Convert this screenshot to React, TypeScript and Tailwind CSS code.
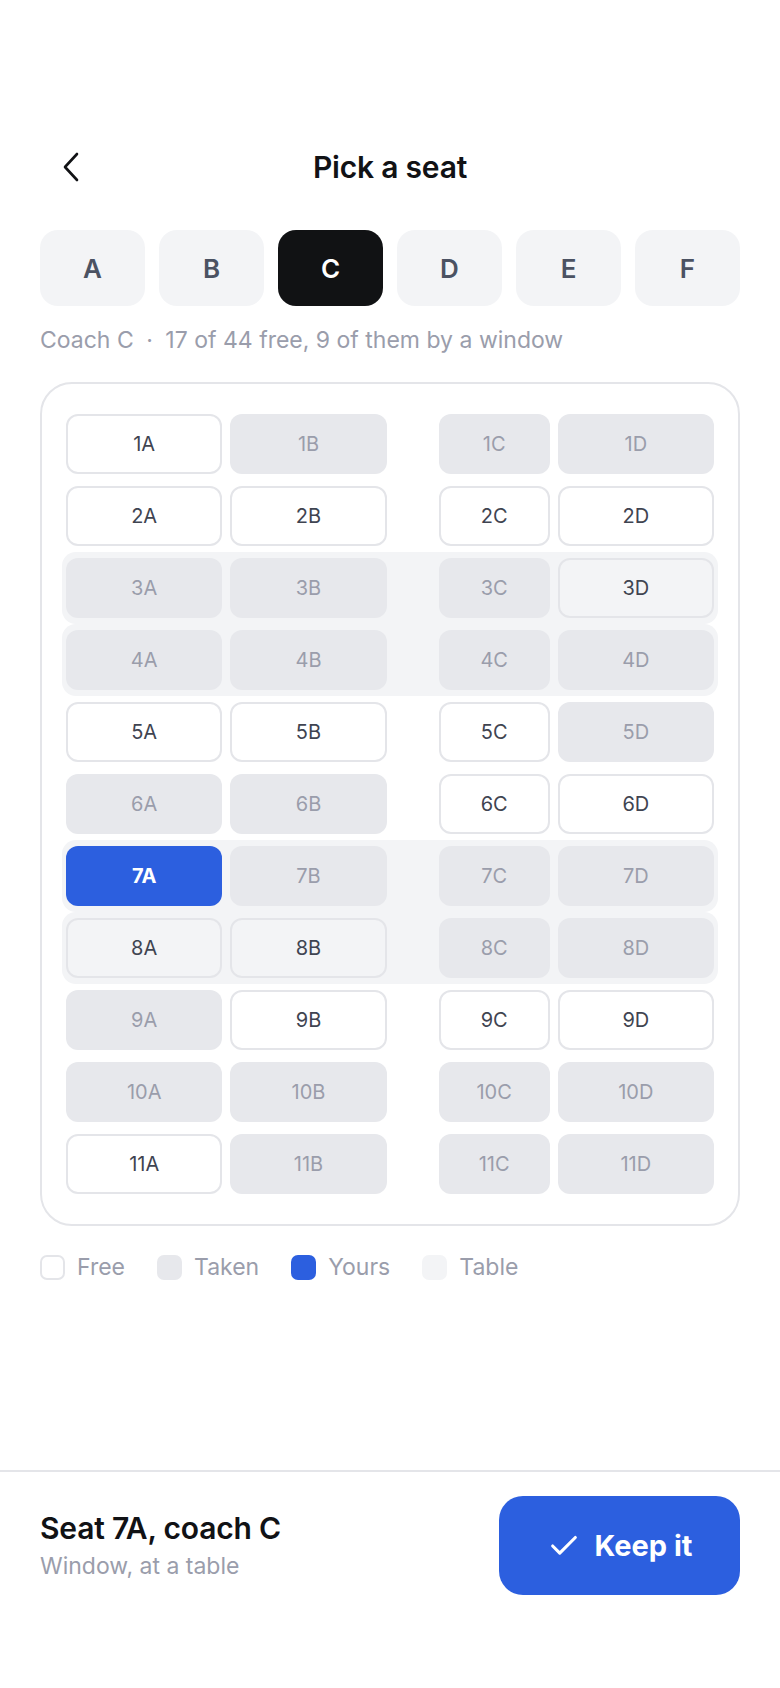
import { Check } from "lucide-react";

type SeatState = "free" | "taken" | "yours";

// one string per row, columns A B C D: f = free, t = taken, y = yours
const rows: { seats: string; table: boolean }[] = [
  { seats: "fttt", table: false },
  { seats: "ffff", table: false },
  { seats: "tttf", table: true },
  { seats: "tttt", table: true },
  { seats: "ffft", table: false },
  { seats: "ttff", table: false },
  { seats: "yttt", table: true },
  { seats: "fftt", table: true },
  { seats: "tfff", table: false },
  { seats: "tttt", table: false },
  { seats: "fttt", table: false },
];

const coaches = ["A", "B", "C", "D", "E", "F"];
const letters = ["A", "B", "C", "D"];

function toState(c: string): SeatState {
  if (c === "y") return "yours";
  if (c === "t") return "taken";
  return "free";
}

function Seat({ label, state }: { label: string; state: SeatState }) {
  let cls = "border-2 border-[#e4e5e9] text-[#3f4451]";
  if (state === "taken") cls = "bg-[#e7e8ec] text-[#9a9dab]";
  if (state === "yours") cls = "bg-[#2c5fdf] text-white font-bold";
  return (
    <button className={`w-full h-[60px] rounded-xl flex items-center justify-center text-[20px] ${cls}`}>
      {label}
    </button>
  );
}

export default function App() {
  return (
    <div className="min-h-[1688px] flex flex-col bg-white font-['Inter',sans-serif]">
      <main className="flex-1 px-10 pt-[139px]">
        {/* Header */}
        <div className="grid grid-cols-[56px_1fr_56px] items-center h-14">
          <button className="w-14 h-14 flex items-center" aria-label="Back">
            <svg width="20" height="32" viewBox="0 0 20 32" className="ml-[21px]" fill="none">
              <polyline
                points="16,3 4,16 16,29"
                stroke="#111215"
                strokeWidth="2.6"
                strokeLinecap="round"
                strokeLinejoin="round"
              />
            </svg>
          </button>
          <h1 className="text-center text-[30px] font-semibold text-[#111215] tracking-[-0.2px]">Pick a seat</h1>
          <div />
        </div>

        {/* Coach tabs */}
        <div className="grid grid-cols-6 gap-[14px] mt-[35px]">
          {coaches.map((c) => (
            <button
              key={c}
              className={`h-[76px] rounded-[18px] flex items-center justify-center text-[26px] font-semibold ${
                c === "C" ? "bg-[#111214] text-white" : "bg-[#f3f4f6] text-[#4b5262]"
              }`}
            >
              {c}
            </button>
          ))}
        </div>

        <p className="mt-[18px] text-[23px] leading-8 text-[#9a9dab]">
          Coach C <span className="mx-[6px]">·</span> 17 of 44 free, 9 of them by a window
        </p>

        {/* Seat map */}
        <div className="mt-[26px] border-2 border-[#e4e5e9] rounded-[32px] px-5 py-6">
          {rows.map((row, i) => (
            <div
              key={i}
              className={`grid grid-cols-[1fr_1fr_36px_111px_1fr] gap-2 px-1 py-1.5 rounded-[14px] ${
                row.table ? "bg-[#f3f4f6]" : ""
              }`}
            >
              {row.seats.split("").map((s, j) => (
                <div key={j} className={j === 2 ? "col-start-4" : ""}>
                  <Seat label={`${i + 1}${letters[j]}`} state={toState(s)} />
                </div>
              ))}
            </div>
          ))}
        </div>

        {/* Legend */}
        <div className="mt-[25px] flex items-center gap-8 text-[23px] leading-8 text-[#9a9dab]">
          <div className="flex items-center gap-3">
            <span className="w-[25px] h-[25px] rounded-[7px] border-2 border-[#e4e5e9]" />
            Free
          </div>
          <div className="flex items-center gap-3">
            <span className="w-[25px] h-[25px] rounded-[7px] bg-[#e7e8ec]" />
            Taken
          </div>
          <div className="flex items-center gap-3">
            <span className="w-[25px] h-[25px] rounded-[7px] bg-[#2c5fdf]" />
            Yours
          </div>
          <div className="flex items-center gap-3">
            <span className="w-[25px] h-[25px] rounded-[7px] bg-[#f3f4f6]" />
            Table
          </div>
        </div>
      </main>

      {/* Footer */}
      <footer className="border-t-2 border-[#e4e5e9] px-10 pt-[24px] pb-[93px] flex items-center justify-between">
        <div>
          <div className="text-[30px] leading-[34px] font-semibold text-[#111215] tracking-[-0.2px]">Seat 7A, coach C</div>
          <div className="mt-[7px] text-[23px] leading-7 text-[#9a9dab]">Window, at a table</div>
        </div>
        <button className="w-[241px] h-[99px] rounded-[24px] bg-[#2c5fdf] text-white flex items-center justify-center gap-[14px]">
          <Check size={34} strokeWidth={2.2} />
          <span className="text-[29px] font-bold">Keep it</span>
        </button>
      </footer>
    </div>
  );
}
